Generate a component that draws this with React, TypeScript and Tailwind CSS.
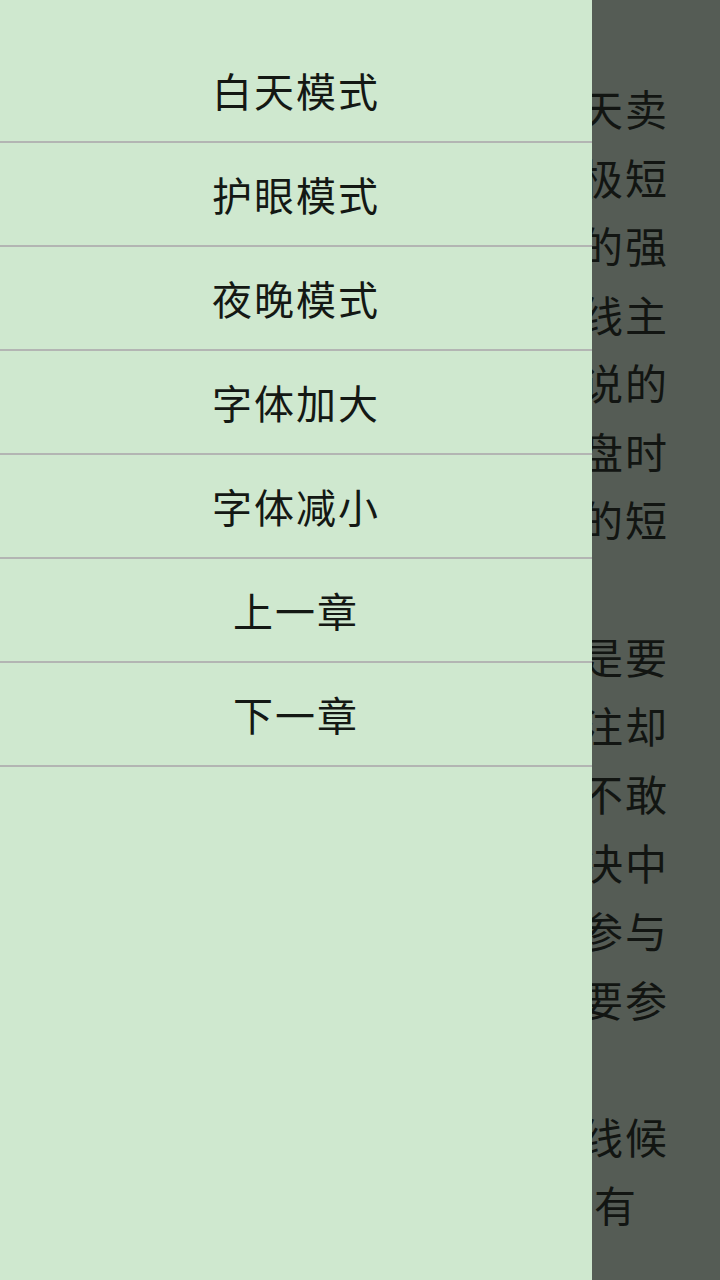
import React from 'react';

const menuItems = ['白天模式', '护眼模式', '夜晚模式', '字体加大', '字体减小', '上一章', '下一章'];

// visible tail of each page line behind the dimmed area
const lines = ['天卖', '极短', '的强', '线主', '说的', '盘时', '的短', '', '是要', '注却', '不敢', '决中', '参与', '要参', '', '线候'];

export default function App() {
  return (
    <div
      className="flex h-[1280px] w-[720px] overflow-hidden"
      style={{ fontFamily: '"Noto Sans CJK SC", "Noto Sans", sans-serif' }}
    >
      {/* Drawer */}
      <nav className="h-full w-[592px] shrink-0 bg-[#cfe8cf] pt-[39px]">
        {menuItems.map((item) => (
          <button
            key={item}
            className="flex h-[104px] w-full items-center justify-center border-b-2 border-[#b3b5b3] text-[40px] tracking-[2px] text-[#141814]"
          >
            {item}
          </button>
        ))}
      </nav>

      {/* Dimmed reader page */}
      <div className="h-full flex-1 overflow-hidden bg-[#555c55] pt-[74px] text-[#121512]">
        {lines.map((line, i) => (
          <p key={i} className="-ml-[11px] h-[68.5px] whitespace-nowrap text-[42px] leading-[68.5px] tracking-[2px]">
            {line}
          </p>
        ))}
        <p className="ml-[2px] h-[68.5px] whitespace-nowrap text-[42px] leading-[68.5px]">有</p>
      </div>
    </div>
  );
}
